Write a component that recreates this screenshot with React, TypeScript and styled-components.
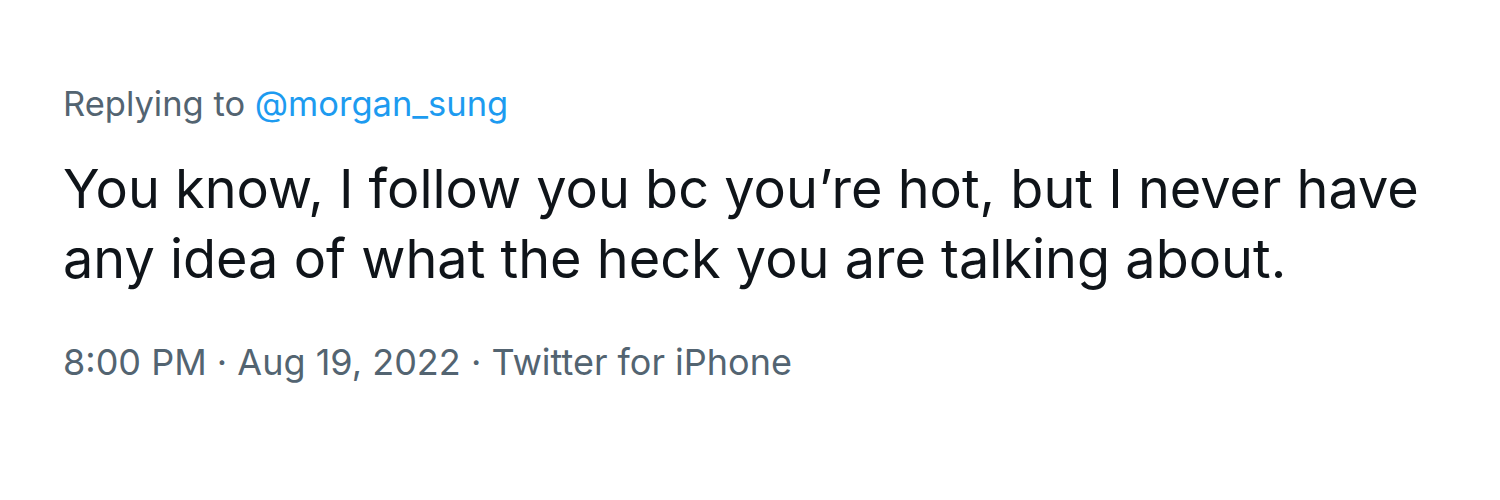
import styled, { createGlobalStyle } from "styled-components";

const Global = createGlobalStyle`
  html, body {
    margin: 0;
    padding: 0;
    background: #ffffff;
  }
  body {
    font-family: Inter, "Liberation Sans", Arial, sans-serif;
  }
`;

const Page = styled.div`
  width: 1500px;
  height: 500px;
  box-sizing: border-box;
  padding: 84px 63px 0;
  background: #ffffff;
`;

const ReplyLine = styled.div`
  font-size: 34.5px;
  line-height: 40px;
  color: #536471;
`;

const Handle = styled.span`
  color: #1d9bf0;
`;

const Body = styled.p`
  margin: 30px 0 0;
  font-size: 54px;
  line-height: 70px;
  color: #0f1419;
  max-width: 1420px;
`;

const Meta = styled.div`
  margin-top: 48px;
  font-size: 36px;
  line-height: 40px;
  color: #536471;
`;

export default function App() {
  return (
    <Page>
      <Global />
      <ReplyLine>
        Replying to <Handle>@morgan_sung</Handle>
      </ReplyLine>
      <Body>
        You know, I follow you bc you’re hot, but I never have
        <br />
        any idea of what the heck you are talking about.
      </Body>
      <Meta>8:00 PM · Aug 19, 2022 · Twitter for iPhone</Meta>
    </Page>
  );
}
